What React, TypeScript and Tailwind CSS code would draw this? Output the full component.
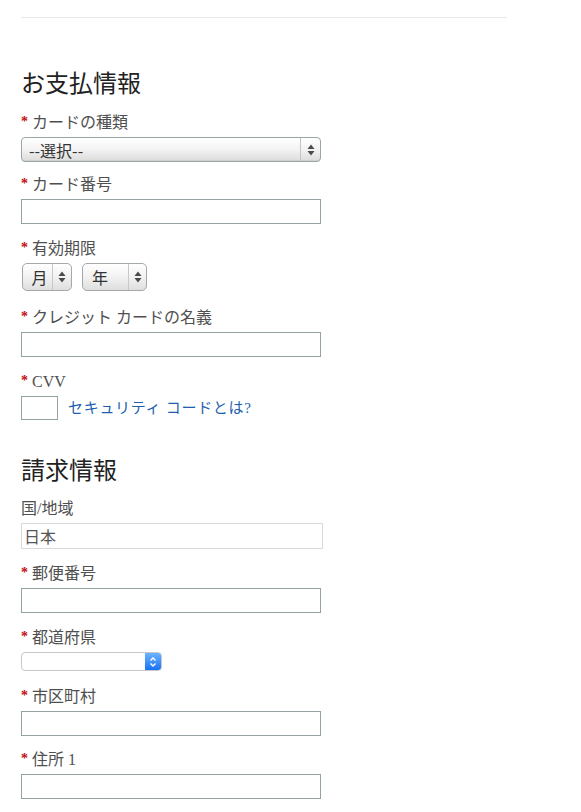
import React from "react";

const serif = { fontFamily: '"Liberation Serif", "Noto Sans CJK JP", serif' };
const sans = { fontFamily: '"Noto Sans CJK JP", "Liberation Sans", sans-serif' };

function Arrows() {
  return (
    <svg width="8" height="12" viewBox="0 0 8 12">
      <path d="M4 0.5 L7.5 5 L0.5 5 Z" fill="#4a4a4a" />
      <path d="M4 11.5 L7.5 7 L0.5 7 Z" fill="#4a4a4a" />
    </svg>
  );
}

function Label({ text, req = true }: { text: string; req?: boolean }) {
  return (
    <div className="flex items-start leading-[20px] text-[16px] text-[#4f4f4f] pt-[1px] mb-[4px]" style={serif}>
      {req && (
        <span className="text-[#c01010] text-[14px] font-bold leading-[14px] mr-[4px] mt-[2px]">*</span>
      )}
      <span>{text}</span>
    </div>
  );
}

function TextInput() {
  return <div className="w-[300px] h-[25px] border border-[#93a3a3] bg-white" />;
}

export default function App() {
  return (
    <div className="bg-white w-[581px] h-[812px] overflow-hidden pl-[21px] pt-[17px]">
      <div className="w-[486px] h-px bg-[#e6eaed]" />
      <h2 className="mt-[51px] text-[24px] leading-[30px] text-[#222]" style={serif}>
        お支払情報
      </h2>

      <div className="mt-[13px]">
        <Label text="カードの種類" />
        <div className="w-[300px] h-[25px] rounded-[4px] border border-[#9aa6a6] bg-gradient-to-b from-white via-[#f3f3f3] to-[#dcdcdc] flex items-center shadow-[inset_0_-1px_0_rgba(0,0,0,0.05)]">
          <span className="flex-1 pl-[7px] text-[16px] text-[#333] leading-none" style={sans}>
            --選択--
          </span>
          <div className="w-px h-full bg-[#c4c4c4]" />
          <div className="w-[19px] flex justify-center">
            <Arrows />
          </div>
        </div>
      </div>

      <div className="mt-[12px]">
        <Label text="カード番号" />
        <TextInput />
      </div>

      <div className="mt-[14px]">
        <Label text="有効期限" />
        <div className="flex gap-[10px] pl-[1px] mt-[1px]">
          <div className="w-[50px] h-[28px] rounded-[5px] border border-[#a3a9a9] bg-gradient-to-b from-white via-[#f2f2f2] to-[#dedede] flex items-center">
            <span className="w-[29px] text-center text-[16px] text-[#333] leading-none pl-[4px]" style={sans}>
              月
            </span>
            <div className="w-px h-full bg-[#c8c8c8]" />
            <div className="flex-1 flex justify-center">
              <Arrows />
            </div>
          </div>
          <div className="w-[65px] h-[28px] rounded-[5px] border border-[#a3a9a9] bg-gradient-to-b from-white via-[#f2f2f2] to-[#dedede] flex items-center">
            <span className="w-[45px] text-left pl-[9px] text-[16px] text-[#333] leading-none" style={sans}>
              年
            </span>
            <div className="w-px h-full bg-[#c8c8c8]" />
            <div className="flex-1 flex justify-center">
              <Arrows />
            </div>
          </div>
        </div>
      </div>

      <div className="mt-[16px]">
        <Label text="クレジット カードの名義" />
        <TextInput />
      </div>

      <div className="mt-[14px]">
        <Label text="CVV" />
        <div className="flex items-center">
          <div className="w-[37px] h-[24px] border border-[#93a3a3] bg-white" />
          <span className="ml-[10px] text-[15px] text-[#1d5fae] leading-none tracking-[0.7px]" style={serif}>
            セキュリティ コードとは?
          </span>
        </div>
      </div>

      <h2 className="mt-[36px] text-[24px] leading-[30px] text-[#222]" style={serif}>
        請求情報
      </h2>

      <div className="mt-[12px]">
        <Label text="国/地域" req={false} />
        <div className="w-[302px] h-[26px] border border-[#d9d9d9] bg-white flex items-center pl-[2px]">
          <span className="text-[16px] text-[#555] leading-none" style={sans}>
            日本
          </span>
        </div>
      </div>

      <div className="mt-[14px]">
        <Label text="郵便番号" />
        <TextInput />
      </div>

      <div className="mt-[14px]">
        <Label text="都道府県" />
        <div className="w-[141px] h-[19px] rounded-[4px] border border-[#c8c8c8] bg-white flex overflow-hidden">
          <div className="flex-1" />
          <div className="w-[16px] h-full bg-gradient-to-b from-[#6cb3ff] to-[#1671f2] flex items-center justify-center">
            <svg width="8" height="12" viewBox="0 0 8 12">
              <path d="M1.5 4.5 L4 2 L6.5 4.5" stroke="white" strokeWidth="1.4" fill="none" />
              <path d="M1.5 7.5 L4 10 L6.5 7.5" stroke="white" strokeWidth="1.4" fill="none" />
            </svg>
          </div>
        </div>
      </div>

      <div className="mt-[15px]">
        <Label text="市区町村" />
        <TextInput />
      </div>

      <div className="mt-[13px]">
        <Label text="住所 1" />
        <TextInput />
      </div>
    </div>
  );
}
